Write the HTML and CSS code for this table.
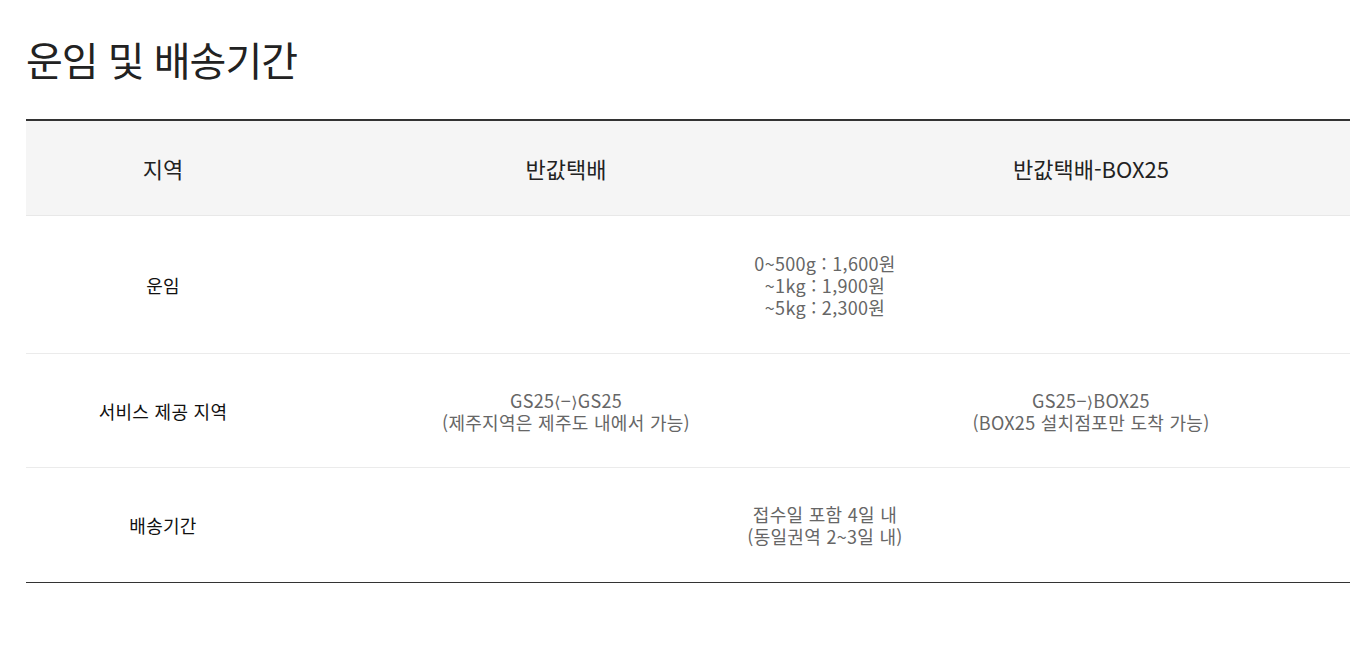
FILE: index.html
```html
<!DOCTYPE html>
<html lang="ko">
<head>
<meta charset="utf-8">
<link rel="stylesheet" href="styles.css">
</head>
<body>
<div class="page">
  <h2 class="title">운임 및 배송기간</h2>
  <table class="fee-table">
    <colgroup>
      <col class="c1">
      <col class="c2">
      <col class="c3">
    </colgroup>
    <thead>
      <tr>
        <th>지역</th>
        <th>반값택배</th>
        <th>반값택배-BOX25</th>
      </tr>
    </thead>
    <tbody>
      <tr class="r-fee">
        <th>운임</th>
        <td colspan="2">0~500g : 1,600원<br>~1kg : 1,900원<br>~5kg : 2,300원</td>
      </tr>
      <tr>
        <th>서비스 제공 지역</th>
        <td>GS25<span class="ang">⟨</span>−<span class="ang">⟩</span>GS25<br>(제주지역은 제주도 내에서 가능)</td>
        <td>GS25−<span class="ang">⟩</span>BOX25<br>(BOX25 설치점포만 도착 가능)</td>
      </tr>
      <tr>
        <th>배송기간</th>
        <td colspan="2">접수일 포함 4일 내<br>(동일권역 2~3일 내)</td>
      </tr>
    </tbody>
  </table>
</div>
</body>
</html>
```

FILE: styles.css
```css
html, body {
  margin: 0;
  padding: 0;
  background: #fff;
}
body {
  font-family: "Noto Sans CJK KR", "Noto Sans", sans-serif;
  color: #222;
}
.page {
  padding: 30px 0 0 26px;
  width: 1324px;
}
.title {
  margin: 0;
  font-size: 40px;
  font-weight: 400;
  letter-spacing: -1px;
  line-height: 58px;
  color: #222;
}
.fee-table {
  margin-top: 31px;
  width: 1324px;
  border-collapse: collapse;
  table-layout: fixed;
  border-top: 2px solid #333;
  border-bottom: 1px solid #333;
}
.c1 { width: 274px; }
.c2 { width: 532px; }
.c3 { width: 518px; }
.fee-table thead th {
  background: #f5f5f5;
  height: 94px;
  padding: 0;
  font-size: 22px;
  font-weight: 400;
  letter-spacing: 0;
  color: #222;
  border-bottom: 1px solid #e8e8e8;
  vertical-align: middle;
}
.fee-table tbody th,
.fee-table tbody td {
  text-align: center;
  vertical-align: middle;
  padding: 35px 0 34px;
  font-size: 18px;
  line-height: 22px;
  letter-spacing: 0.3px;
  border-bottom: 1px solid #ebebeb;
}
.fee-table tbody tr.r-fee th,
.fee-table tbody tr.r-fee td {
  padding: 36px 0 35px;
}
.fee-table tbody th {
  font-weight: 400;
  color: #111;
}
.fee-table tbody td {
  color: #666;
}
.fee-table tbody tr:last-child th,
.fee-table tbody tr:last-child td {
  border-bottom: 0;
  padding-bottom: 35px;
}
.ang {
  font-family: "DejaVu Sans", sans-serif;
  font-size: 16px;
  line-height: 17px;
}
```
